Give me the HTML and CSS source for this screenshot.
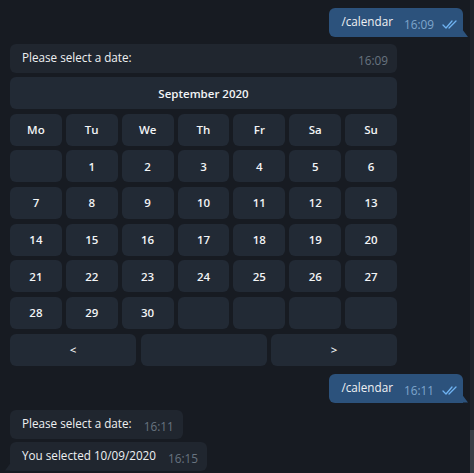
FILE: index.html
```html
<!DOCTYPE html>
<html lang="en">
<head>
    <meta charset="UTF-8">
    <title>Calendar bot</title>
    <link rel="stylesheet" href="styles.css">
</head>
<body>
    <div class="app">
        <div class="chat">
            <!-- outgoing command -->
            <div class="msg out">
                <span class="text">/calendar</span>
                <span class="meta">16:09
                    <svg class="ticks" width="16" height="9" viewBox="0 0 16 9"><path d="M1 5l3 3 6-7M7 8l7-7" fill="none" stroke="#6fb3f2" stroke-width="1.3" stroke-linecap="round" stroke-linejoin="round"/></svg>
                </span>
            </div>

            <!-- calendar message -->
            <div class="calendar">
                <div class="msg in wide">
                    <span class="text">Please select a date:</span>
                    <span class="meta">16:09</span>
                </div>
                <div class="kb">
                    <div class="btn title">September 2020</div>
                    <div class="grid">
                        <div class="btn">Mo</div><div class="btn">Tu</div><div class="btn">We</div><div class="btn">Th</div><div class="btn">Fr</div><div class="btn">Sa</div><div class="btn">Su</div>
                        <div class="btn"></div><div class="btn">1</div><div class="btn">2</div><div class="btn">3</div><div class="btn">4</div><div class="btn">5</div><div class="btn">6</div>
                        <div class="btn">7</div><div class="btn">8</div><div class="btn">9</div><div class="btn">10</div><div class="btn">11</div><div class="btn">12</div><div class="btn">13</div>
                        <div class="btn">14</div><div class="btn">15</div><div class="btn">16</div><div class="btn">17</div><div class="btn">18</div><div class="btn">19</div><div class="btn">20</div>
                        <div class="btn">21</div><div class="btn">22</div><div class="btn">23</div><div class="btn">24</div><div class="btn">25</div><div class="btn">26</div><div class="btn">27</div>
                        <div class="btn">28</div><div class="btn">29</div><div class="btn">30</div><div class="btn"></div><div class="btn"></div><div class="btn"></div><div class="btn"></div>
                    </div>
                    <div class="nav">
                        <div class="btn">&lt;</div>
                        <div class="btn"></div>
                        <div class="btn">&gt;</div>
                    </div>
                </div>
            </div>

            <div class="msg out second">
                <span class="text">/calendar</span>
                <span class="meta">16:11
                    <svg class="ticks" width="16" height="9" viewBox="0 0 16 9"><path d="M1 5l3 3 6-7M7 8l7-7" fill="none" stroke="#6fb3f2" stroke-width="1.3" stroke-linecap="round" stroke-linejoin="round"/></svg>
                </span>
            </div>

            <div class="group">
                <div class="msg in">
                    <span class="text">Please select a date:</span>
                    <span class="meta">16:11</span>
                </div>
                <div class="msg in last">
                    <span class="text">You selected 10/09/2020</span>
                    <span class="meta">16:15</span>
                </div>
            </div>
        </div>
        <div class="scrollbar"><div class="thumb"></div></div>
    </div>
</body>
</html>
```

FILE: styles.css
```css
/* base */
* {
    margin: 0;
    padding: 0;
    box-sizing: border-box;
}

body {
    background: #171b22;
    font-family: 'Open Sans', 'Noto Sans', sans-serif;
    font-size: 11.7px;
    color: #eef0f2;
    height: 473px;
    overflow: hidden;
}

.app {
    display: flex;
    height: 473px;
}

.chat {
    flex: 1;
    display: flex;
    flex-direction: column;
    padding: 8px 7px 0 10px;
}

.scrollbar {
    width: 4px;
    background: #1f232a;
    display: flex;
    flex-direction: column;
    justify-content: flex-end;
}

.thumb {
    height: 43px;
    background: #3a3f46;
}

/* bubbles */
.msg {
    position: relative;
    display: flex;
    align-items: flex-end;
    height: 29px;
    padding: 0 9px 5px 12px;
    border-radius: 6px;
}

.msg .text {
    line-height: 17px;
    padding-bottom: 2px;
}

.msg .meta {
    display: flex;
    align-items: center;
    font-size: 11.8px;
    line-height: 15px;
    margin-left: 12px;
    color: #687480;
}

.msg.in {
    background: #20262f;
    align-self: flex-start;
}

.msg.out {
    background: #2c527c;
    align-self: flex-end;
    border-bottom-right-radius: 0;
    padding-right: 5px;
}

.msg.out .meta {
    color: #7fa6cc;
    margin-left: 11px;
}

.ticks {
    margin-left: 8px;
}

.msg.out::after {
    content: "";
    position: absolute;
    right: -5px;
    bottom: 0;
    width: 6px;
    height: 8px;
    background: #2c527c;
    clip-path: polygon(0 0, 100% 100%, 0 100%);
}

.msg.in.last {
    border-bottom-left-radius: 0;
}

.msg.in.last::after {
    content: "";
    position: absolute;
    left: -5px;
    bottom: 0;
    width: 6px;
    height: 8px;
    background: #20262f;
    clip-path: polygon(100% 0, 100% 100%, 0 100%);
}

/* calendar keyboard */
.calendar {
    margin-top: 7px;
    width: 387px;
}

.msg.wide {
    justify-content: space-between;
}

.kb {
    display: flex;
    flex-direction: column;
    gap: 4.67px;
    margin-top: 4px;
}

.btn {
    height: 32px;
    background: #222a35;
    border-radius: 6px;
    display: flex;
    align-items: center;
    justify-content: center;
    font-size: 11.5px;
    font-weight: 600;
    color: #f2f4f6;
}

.grid {
    display: grid;
    grid-template-columns: repeat(7, 1fr);
    grid-auto-rows: 32px;
    column-gap: 4px;
    row-gap: 4.67px;
}

.nav {
    display: grid;
    grid-template-columns: repeat(3, 1fr);
    column-gap: 4.5px;
}

.msg.out.second {
    margin-top: 8px;
}

.group {
    margin-top: 7px;
    display: flex;
    flex-direction: column;
    gap: 3px;
}
```
